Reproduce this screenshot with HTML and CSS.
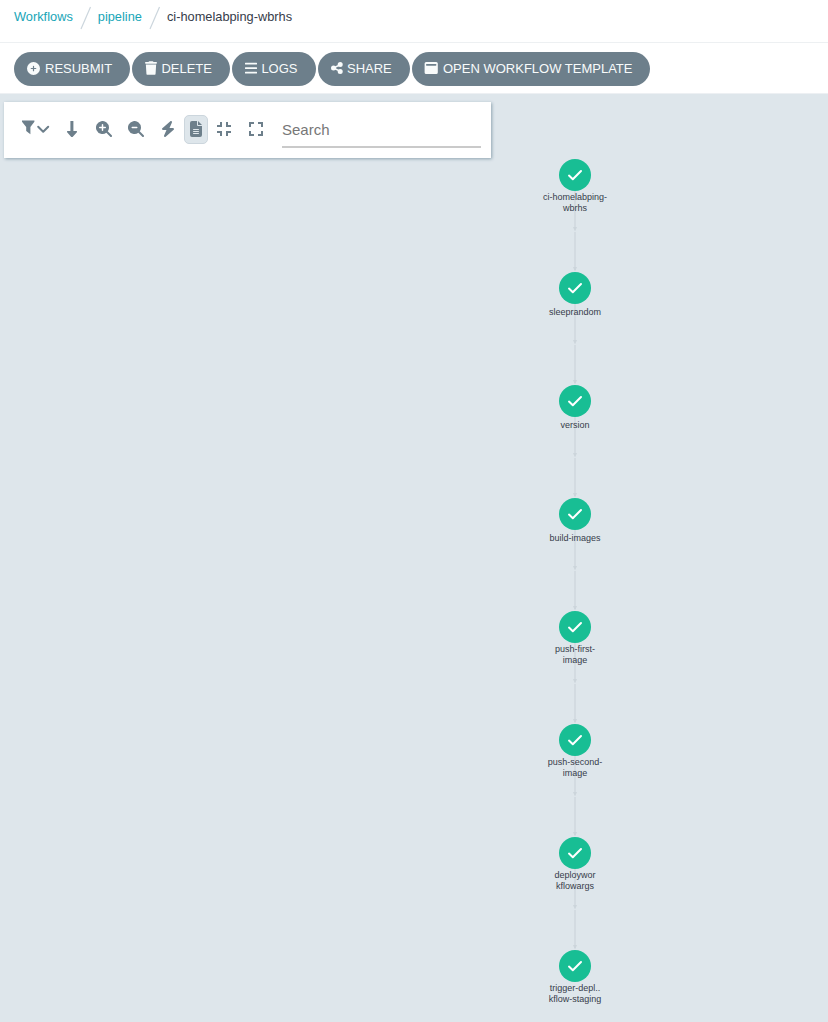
FILE: index.html
```html
<!DOCTYPE html>
<html lang="en">
<head>
<meta charset="utf-8">
<title>ci-homelabping-wbrhs</title>
<link rel="stylesheet" href="styles.css">
</head>
<body>
<nav class="crumbs">
  <a class="crumb">Workflows</a>
  <svg class="slash" width="12" height="24" viewBox="0 0 12 24"><path d="M1 23 10.500 1"/></svg>
  <a class="crumb">pipeline</a>
  <svg class="slash" width="12" height="24" viewBox="0 0 12 24"><path d="M1 23 10.500 1"/></svg>
  <span class="crumb current">ci-homelabping-wbrhs</span>
</nav>
<div class="actions">
  <button class="btn resubmit"><svg width="13" height="13" viewBox="0 0 512 512"><path fill-rule="evenodd" d="M256 0a256 256 0 1 0 0 512 256 256 0 0 0 0-512zm-24 344v-64h-64a24 24 0 0 1 0-48h64v-64a24 24 0 0 1 48 0v64h64a24 24 0 0 1 0 48h-64v64a24 24 0 0 1-48 0z"/></svg><span>RESUBMIT</span></button>
  <button class="btn delete"><svg width="12" height="14" viewBox="0 0 448 512"><path d="M135 18 128 32H32a32 32 0 0 0 0 64h384a32 32 0 0 0 0-64h-96l-7-14A32 32 0 0 0 284 0H164a32 32 0 0 0-29 18zM416 128H32l21 339a48 48 0 0 0 48 45h246a48 48 0 0 0 48-45z"/></svg><span>DELETE</span></button>
  <button class="btn logs"><svg width="12" height="12" viewBox="0 0 12 12"><path d="M.6.700h10.800a.6.6 0 0 1 0 1.700H.6a.6.6 0 0 1 0-1.700zM.6 5.200h10.800a.6.6 0 0 1 0 1.700H.6a.6.6 0 0 1 0-1.700zM.6 9.700h10.800a.6.6 0 0 1 0 1.700H.6a.6.6 0 0 1 0-1.700z"/></svg><span>LOGS</span></button>
  <button class="btn share"><svg width="12" height="12" viewBox="0 0 12 12"><path class="arms" d="M9.300 2.600 2.600 6l6.700 3.400"/><circle cx="9.200" cy="2.600" r="2.500"/><circle cx="2.500" cy="6" r="2.500"/><circle cx="9.200" cy="9.400" r="2.500"/></svg><span>SHARE</span></button>
  <button class="btn template"><svg width="14" height="12" viewBox="0 0 14 12"><path fill-rule="evenodd" d="M2.200 0h10a1.600 1.600 0 0 1 1.600 1.600v8.800A1.600 1.600 0 0 1 12.200 12h-10a1.600 1.600 0 0 1-1.600-1.600V1.600A1.600 1.600 0 0 1 2.200 0zm.6 2a.6.600 0 0 0 0 1.700h8.800a.6.600 0 0 0 0-1.700z"/></svg><span>OPEN WORKFLOW TEMPLATE</span></button>
</div>
<main class="stage">
  <div class="panel">
    <div class="tools">
      <span class="tool filter"><svg width="28" height="15" viewBox="0 0 28 15"><path d="M0 .5h12.400v1.200l-4 5.200v7.300L4.200 11V6.900L0 1.700z"/><path class="stroke" d="m16.200 6.700 5 5 5-5"/></svg></span>
      <span class="tool"><svg width="10" height="16" viewBox="0 0 10 16"><path d="M3.400 0h3v10h3.500v1.200L5.600 15.900H4.300L.1 11.200V10h3.300z"/></svg></span>
      <span class="tool"><svg width="16" height="16" viewBox="0 0 512 512"><path fill-rule="evenodd" d="M416 208c0 46-15 88-40 123l127 126a32 32 0 0 1-46 46L331 376A208 208 0 1 1 416 208zM184 296a24 24 0 0 0 48 0v-64h64a24 24 0 0 0 0-48h-64v-64a24 24 0 0 0-48 0v64h-64a24 24 0 0 0 0 48h64z"/></svg></span>
      <span class="tool"><svg width="16" height="16" viewBox="0 0 512 512"><path fill-rule="evenodd" d="M416 208c0 46-15 88-40 123l127 126a32 32 0 0 1-46 46L331 376A208 208 0 1 1 416 208zM136 184a24 24 0 0 0 0 48h144a24 24 0 0 0 0-48z"/></svg></span>
      <span class="tool"><svg width="14" height="16" viewBox="0 0 448 512"><path d="M349.400 44.600c5.900-13.700 1.500-29.700-10.600-38.500s-28.600-8-39.900 1.800l-256 224c-10 8.800-13.600 22.900-8.900 35.300S50.700 288 64 288h111.500L98.600 467.400c-5.900 13.700-1.500 29.700 10.600 38.500s28.600 8 39.900-1.800l256-224c10-8.800 13.600-22.900 8.900-35.300s-16.600-20.700-30-20.700H272.500z"/></svg></span>
      <span class="tool active"><svg width="12" height="16" viewBox="0 0 12 16"><path fill-rule="evenodd" d="M2 0h5v4a1 1 0 0 0 1 1h4v9a2 2 0 0 1-2 2H2a2 2 0 0 1-2-2V2a2 2 0 0 1 2-2zm6 0 4 4H8zM3.500 8a.5.500 0 0 0 0 1h5a.5.500 0 0 0 0-1zM3.500 10a.5.500 0 0 0 0 1h5a.5.500 0 0 0 0-1zM3.500 12a.5.500 0 0 0 0 1h5a.5.500 0 0 0 0-1z"/></svg></span>
      <span class="tool"><svg width="14" height="14" viewBox="0 0 14 14"><path class="corners" d="M4 0v4H0M10 0v4h4M0 10h4v4M14 10h-4v4"/></svg></span>
      <span class="tool"><svg width="14" height="14" viewBox="0 0 14 14"><path class="corners" d="M1 5V1h4M9 1h4v4M1 9v4h4M13 9v4H9"/></svg></span>
    </div>
    <input class="search" placeholder="Search">
  </div>
  <svg class="graph" width="828" height="928" viewBox="0 94 828 928">
    <defs>
      <g id="edge"><path class="line" d="M0 16V53M0 57V95"/><path class="arrow" d="M-2 52h4L0 56.500zM-2 92h4L0 96.500z"/></g>
      <g id="done"><circle class="disc" r="16"/><path class="check" d="m-6 .6 3.800 3.600L6-4"/></g>
    </defs>
    <g transform="translate(575 175)"><use href="#edge"/><use href="#done"/><text y="25">ci-homelabping-</text><text y="36">wbrhs</text></g>
    <g transform="translate(575 288)"><use href="#edge"/><use href="#done"/><text y="27">sleeprandom</text></g>
    <g transform="translate(575 401)"><use href="#edge"/><use href="#done"/><text y="27">version</text></g>
    <g transform="translate(575 514)"><use href="#edge"/><use href="#done"/><text y="27">build-images</text></g>
    <g transform="translate(575 627)"><use href="#edge"/><use href="#done"/><text y="25">push-first-</text><text y="36">image</text></g>
    <g transform="translate(575 740)"><use href="#edge"/><use href="#done"/><text y="25">push-second-</text><text y="36">image</text></g>
    <g transform="translate(575 853)"><use href="#edge"/><use href="#done"/><text y="25">deploywor</text><text y="36">kflowargs</text></g>
    <g transform="translate(575 966)"><use href="#done"/><text y="25">trigger-depl..</text><text y="36">kflow-staging</text></g>
  </svg>
</main>
</body>
</html>
```
FILE: styles.css
```css
* { box-sizing: border-box; }
body {
  margin: 0;
  height: 1022px;
  overflow: hidden;
  display: flex;
  flex-direction: column;
  background: #fff;
  font-family: "Liberation Sans", Arial, sans-serif;
  color: #363c4a;
}
.crumbs {
  height: 43px;
  padding: 6px 14px 0;
  display: flex;
  align-items: flex-start;
  border-bottom: 1px solid #edf0f2;
  font-size: 12.8px;
  line-height: 22px;
}
.crumb { color: #18a5b7; }
.current { color: #363c4a; }
.slash { margin: 0 6px 0 7px; }
.slash path { fill: none; stroke: #ccd6dd; stroke-width: 1.2; }
.actions {
  height: 51px;
  padding: 9px 14px 0;
  display: flex;
  gap: 2px;
  border-bottom: 1px solid #edf0f3;
}
.btn {
  height: 34px;
  padding: 0 0 0 13px;
  display: flex;
  align-items: center;
  gap: 4.4px;
  border: 0;
  border-radius: 17px;
  background: #6d7f8b;
  color: #f8fbfb;
  font: 13px/34px "Liberation Sans", Arial, sans-serif;
  white-space: nowrap;
}
.btn svg { fill: currentColor; flex: none; margin-bottom: 2px; }
.arms { fill: none; stroke: currentColor; stroke-width: 1.6; }
.resubmit { width: 116px; gap: 5px; }
.resubmit svg { margin-bottom: 1px; }
.delete { width: 98px; }
.logs { width: 84px; }
.share { width: 92px; gap: 4px; }
.template { width: 238px; padding-left: 12px; gap: 5px; }
.stage { flex: 1; position: relative; background: #dee6eb; }
.graph { display: block; }
.panel {
  position: absolute;
  left: 4px;
  top: 8px;
  width: 487px;
  height: 56px;
  padding: 13px 10px 0 16px;
  display: flex;
  background: #fff;
  box-shadow: 1px 1px 3px #8fa4b1;
}
.tools { display: flex; gap: 8px; }
.tool {
  width: 24px;
  height: 29px;
  padding-bottom: 1px;
  display: flex;
  align-items: center;
  justify-content: center;
  border: 1px solid transparent;
  border-radius: 5px;
}
.tool svg { fill: #6d7f8b; flex: none; }
.filter { width: 32px; padding-bottom: 4px; }
.active { margin-left: -4px; background: #dee6eb; border-color: #ccd6dd; }
.active + .tool { margin-left: -4px; }
.stroke { fill: none; stroke: #6d7f8b; stroke-width: 2; stroke-linecap: round; stroke-linejoin: round; }
.corners { fill: none; stroke: #6d7f8b; stroke-width: 2; }
.search {
  width: 199px;
  height: 33px;
  margin-left: auto;
  padding: 0 0 3px;
  border: 0;
  border-bottom: 2px solid #cacaca;
  outline: 0;
  background: none;
  font: 15px "Liberation Sans", Arial, sans-serif;
}
.search::placeholder { color: #777; }
.line { fill: none; stroke: #d3dbe1; stroke-width: 2; }
.arrow { fill: #ccd5db; }
.disc { fill: #18be94; }
.check { fill: none; stroke: #fff; stroke-width: 2; stroke-linecap: round; stroke-linejoin: round; }
.graph text { fill: #363c4a; font-size: 9px; text-anchor: middle; }
```
